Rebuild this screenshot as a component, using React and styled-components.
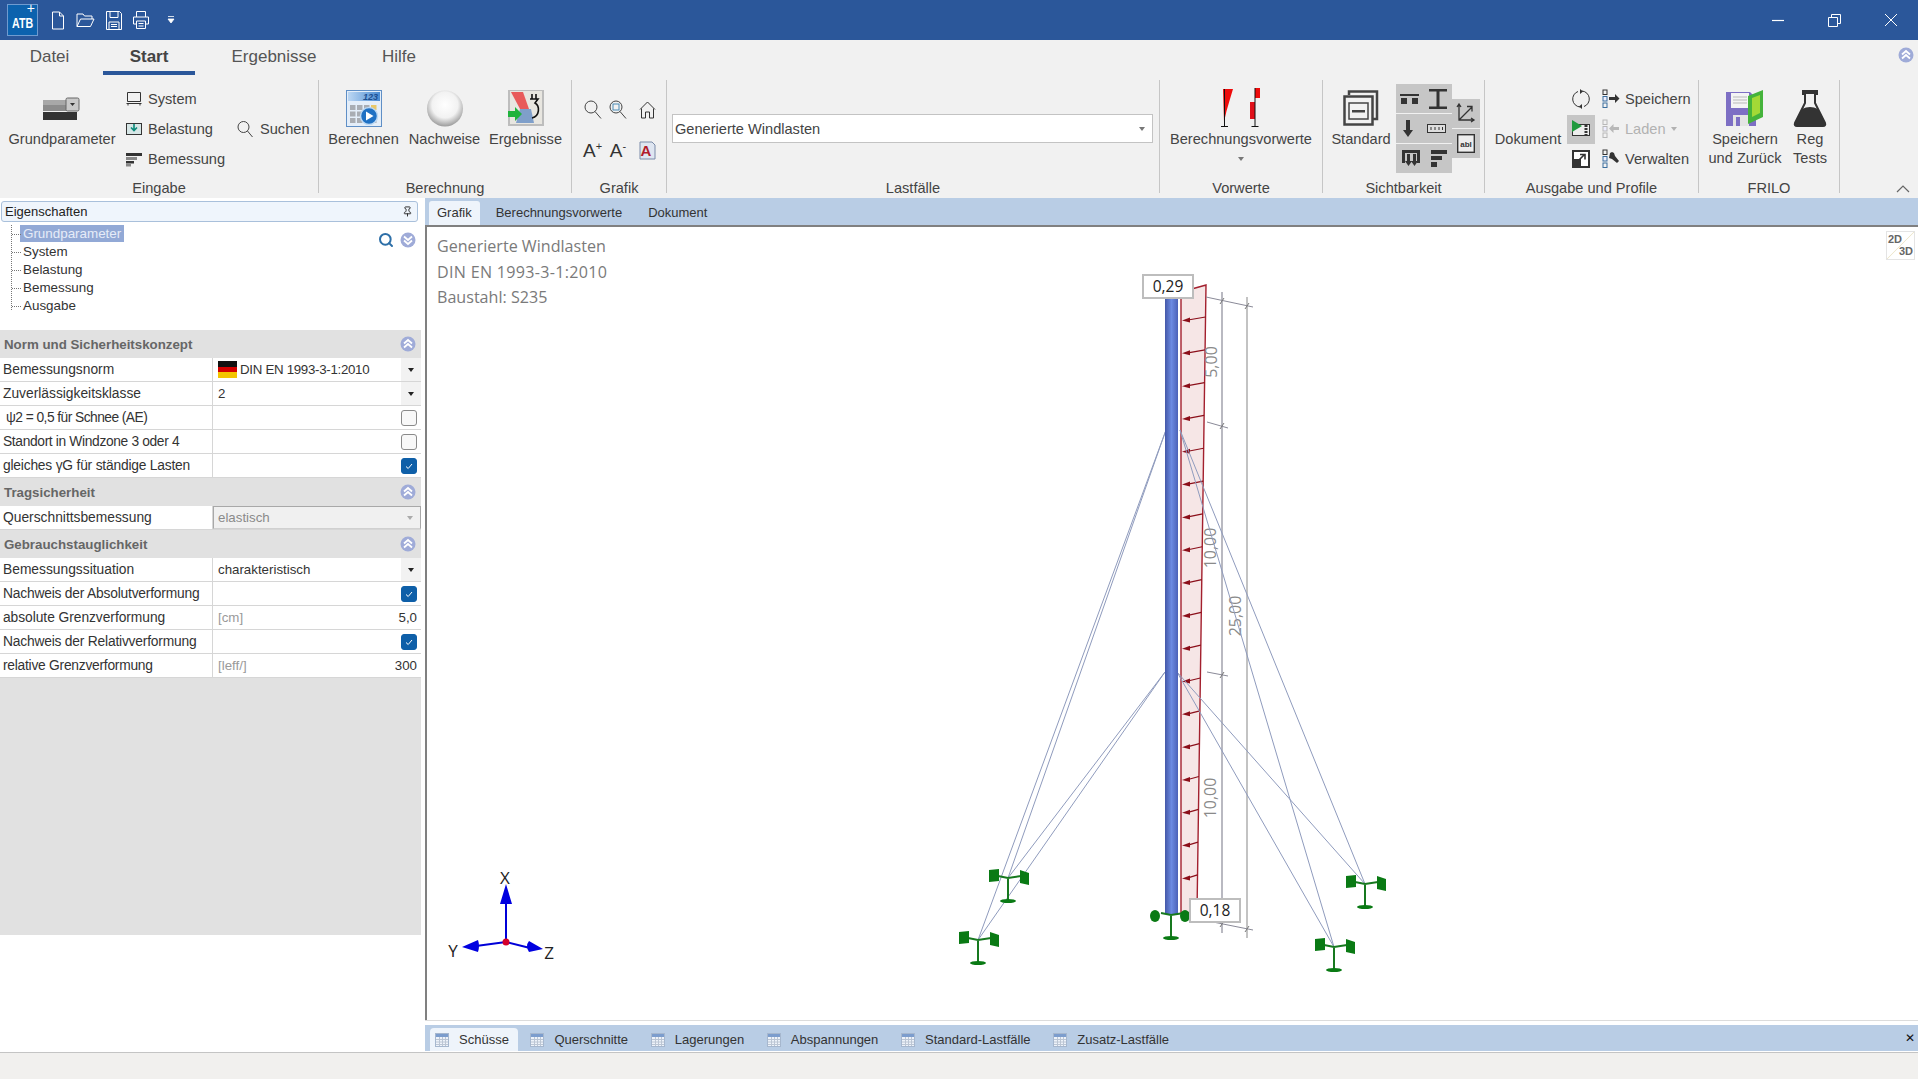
import React from 'react';
import styled, { createGlobalStyle } from 'styled-components';
import { Search, Pin } from 'lucide-react';

const GlobalStyle = createGlobalStyle`
    html, body { margin: 0; padding: 0; background: #fff; overflow: hidden; }
    body { font-family: "Liberation Sans", Arial, sans-serif; color: #3c3c3c; }
    * { box-sizing: border-box; }
`;

const Page = styled.div`
    width: 1918px;
    height: 1079px;
    display: flex;
    flex-direction: column;
`;

/* title bar */
const TitleBar = styled.header`
    height: 40px;
    flex: none;
    background: #2b579a;
    display: flex;
    align-items: center;
    padding-left: 7px;
`;
const Logo = styled.div`
    position: relative;
    width: 31px;
    height: 32px;
    background: #0c62ae;
    border: 1px solid #6f9bd0;
    color: #fff;
    padding: 11px 0 0 0;
    span {
        display: block;
        font-size: 14px;
        font-weight: bold;
        line-height: 14px;
        transform: scaleX(.76);
        transform-origin: 4px 0;
        padding-left: 4px;
    }
    i {
        position: absolute;
        right: 2px;
        top: -3px;
        font-size: 14px;
        font-style: normal;
        line-height: 13px;
    }
`;
const QuickIcons = styled.div`
    display: flex;
    align-items: center;
    margin-left: 13px;
    gap: 11px;
`;
const WindowButtons = styled.div`
    margin-left: auto;
    display: flex;
    align-items: center;
    margin-right: 20px;
    gap: 43px;
`;

/* ribbon */
const Ribbon = styled.div`
    height: 158px;
    flex: none;
    background: #f1f1f1;
    display: flex;
    flex-direction: column;
`;
const TabRow = styled.nav`
    height: 35px;
    flex: none;
    display: flex;
    gap: 4px;
    align-items: stretch;
    padding-right: 4px;
`;
const RibbonTab = styled.div`
    width: ${p => p.$w}px;
    text-align: center;
    font-size: 17px;
    line-height: 33px;
    color: #555;
    ${p => p.$active && `
        font-weight: bold;
        color: #444;
        border-bottom: 4px solid #2b579a;
    `}
`;
const TabRowEnd = styled.div`
    margin-left: auto;
    padding-top: 7px;
`;
const GroupRow = styled.div`
    height: 113px;
    margin-top: 5px;
    display: flex;
`;
const Group = styled.section`
    width: ${p => p.$w}px;
    flex: none;
    height: 113px;
    border-right: 1px solid #c6c6c6;
    display: flex;
    flex-direction: column;
`;
const GroupBody = styled.div`
    height: 95px;
    flex: none;
    display: flex;
    justify-content: ${p => p.$center ? 'center' : 'flex-start'};
    padding-left: ${p => p.$pad || 0}px;
`;
const GroupLabel = styled.div`
    height: 18px;
    text-align: center;
    font-size: 14.6px;
    line-height: 26px;
    color: #444;
`;
const LargeButton = styled.div`
    width: ${p => p.$w}px;
    flex: none;
    display: flex;
    flex-direction: column;
    align-items: center;
    font-size: 14.6px;
    line-height: 19px;
    text-align: center;
    color: #444;
    white-space: nowrap;
`;
const IconSlot = styled.div`
    height: 47px;
    margin-bottom: 3px;
    display: flex;
    align-items: flex-end;
    gap: ${p => p.$gap || 0}px;
`;
const Caret = styled.span`
    display: block;
    width: 0;
    height: 0;
    margin: ${p => p.$m || '0'};
    border-left: ${p => p.$s || 3}px solid transparent;
    border-right: ${p => p.$s || 3}px solid transparent;
    border-top: ${p => (p.$s || 3) + 1}px solid ${p => p.$c || '#777'};
`;
const SmallColumn = styled.div`
    padding-top: ${p => p.$top || 4}px;
    width: ${p => p.$w}px;
    flex: none;
    margin-left: ${p => p.$ml || 0}px;
`;
const SmallItem = styled.div`
    height: 30px;
    display: flex;
    align-items: center;
    gap: ${p => p.$gap ?? 6}px;
    font-size: 14.6px;
    color: ${p => p.$dim ? '#b2b2b2' : '#444'};
    white-space: nowrap;
`;
const IconGrid = styled.div`
    display: grid;
    grid-template-columns: 25px 26px 32px;
    grid-auto-rows: 41px;
    padding: 9px 0 0 8px;
    place-items: center;
`;
const ASign = styled.span`
    font-size: 19px;
    color: #333;
    line-height: 19px;
    sup { font-size: 11px; line-height: 0; vertical-align: 7px; }
`;
const ComboBox = styled.div`
    width: 481px;
    height: 29px;
    margin-top: 34px;
    background: #fff;
    border: 1px solid #c3c3c3;
    display: flex;
    align-items: center;
    justify-content: space-between;
    padding: 0 7px 0 2px;
    font-size: 14.6px;
    color: #444;
`;
const Cluster = styled.div`
    width: ${p => p.$w}px;
    height: ${p => p.$h}px;
    margin-top: ${p => p.$top}px;
    flex: none;
    background: #c6c6c6;
    display: flex;
    flex-direction: column;
`;
const ClusterRow = styled.div`
    flex: 1;
    display: flex;
    justify-content: space-around;
    align-items: center;
    & + & { border-top: 1px solid #f1f1f1; }
`;
const ToolCell = styled.div`
    width: 28px;
    height: 29px;
    margin-right: 2px;
    display: flex;
    align-items: center;
    justify-content: center;
    background: ${p => p.$on ? '#c6c6c6' : 'transparent'};
`;
const ExpandArea = styled.div`
    flex: 1;
    display: flex;
    justify-content: flex-end;
    align-items: flex-end;
    padding: 0 8px 0 0;
`;

/* work area */
const Workspace = styled.main`
    height: 854px;
    flex: none;
    display: flex;
`;
const SidePanel = styled.aside`
    width: 425px;
    flex: none;
    background: #fff;
    display: flex;
    flex-direction: column;
    padding-right: 4px;
`;
const PanelHeader = styled.div`
    height: 21px;
    margin: 3px 3px 0 1px;
    flex: none;
    background: #eff5fc;
    border: 1px solid #a9c0db;
    border-radius: 3px;
    display: flex;
    align-items: center;
    justify-content: space-between;
    padding: 0 4px 0 3px;
    font-size: 13px;
    color: #222;
`;
const TreeArea = styled.div`
    height: 108px;
    flex: none;
    display: flex;
    justify-content: space-between;
    padding: 3px 5px 0 0;
`;
const Tree = styled.ul`
    list-style: none;
    margin: 0 0 0 11px;
    padding: 0;
    height: 85px;
    border-left: 1px dotted #777;
`;
const TreeItem = styled.li`
    position: relative;
    height: 18px;
    line-height: 17px;
    font-size: 13.4px;
    padding-left: 11px;
    color: #333;
    &::before {
        content: '';
        position: absolute;
        left: 0;
        top: 9px;
        width: 9px;
        border-top: 1px dotted #777;
    }
    span {
        display: inline-block;
        padding: 0 3px;
        margin-left: -3px;
        ${p => p.$selected && 'background: #92a9d6; color: #e6ecf8;'}
    }
`;
const TreeTools = styled.div`
    display: flex;
    gap: 6px;
    align-items: center;
    height: 30px;
`;
const SectionHeader = styled.div`
    height: 28px;
    background: #e1e1e1;
    display: flex;
    align-items: center;
    justify-content: space-between;
    padding: 0 5px 0 4px;
    font-size: 13.3px;
    font-weight: bold;
    color: #666;
    flex: none;
`;
const Row = styled.div`
    height: 24px;
    flex: none;
    display: flex;
    border-bottom: 1px solid #d6d6d6;
`;
const RowLabel = styled.div`
    width: 213px;
    flex: none;
    padding-left: ${p => p.$indent ? 6 : 3}px;
    border-right: 1px solid #d6d6d6;
    font-size: 13.8px;
    line-height: 23px;
    letter-spacing: ${p => p.$track || 0}px;
    color: #333;
    white-space: nowrap;
`;
const RowValue = styled.div`
    flex: 1;
    display: flex;
    align-items: center;
    justify-content: space-between;
    padding-left: ${p => p.$disabled ? 4 : 5}px;
    font-size: 13.3px;
    color: ${p => p.$disabled ? '#8a8a8a' : '#333'};
    ${p => p.$disabled && 'background: #f0f0f0; border: 1px solid #a8a8a8; border-bottom-color: #d0d0d0;'}
`;
const NormText = styled.span`
    letter-spacing: -.3px;
`;
const Unit = styled.span`
    color: #9a9a9a;
`;
const NumberValue = styled.span`
    padding-right: 4px;
`;
const ArrowCell = styled.div`
    width: 20px;
    height: 23px;
    display: flex;
    align-items: center;
    justify-content: center;
    background: ${p => p.$plain ? 'transparent' : '#f2f2f2'};
`;
const Flag = styled.span`
    display: inline-block;
    width: 19px;
    height: 17px;
    margin-right: 3px;
    vertical-align: -4px;
    background: linear-gradient(#111 0 33%, #d40000 33% 66%, #f4c400 66% 100%);
`;
const CheckBox = styled.div`
    width: 16px;
    height: 16px;
    margin-right: 4px;
    border-radius: 3px;
    border: 1px solid ${p => p.$on ? '#0e5fa8' : '#8a8a8a'};
    background: ${p => p.$on ? '#0e5fa8' : '#f8f8f8'};
    display: flex;
    align-items: center;
    justify-content: center;
`;
const Filler = styled.div`
    height: 257px;
    flex: none;
    background: #e1e1e1;
`;

/* document side */
const DocArea = styled.div`
    flex: 1;
    display: flex;
    flex-direction: column;
    min-width: 0;
`;
const DocTabs = styled.div`
    height: 27px;
    flex: none;
    background: #b9cde5;
    display: flex;
    align-items: flex-end;
    padding-left: 4px;
`;
const DocTab = styled.div`
    height: 24px;
    padding: ${p => p.$pad};
    font-size: 13px;
    line-height: 23px;
    color: #333;
    ${p => p.$active && 'background: #eef4fb; border-radius: 3px 3px 0 0;'}
`;
const Canvas = styled.div`
    position: relative;
    height: 795px;
    flex: none;
    background: #fff;
    border-top: 2px solid #808080;
    border-left: 2px solid #808080;
    padding: 7px 0 0 10px;
    font-family: "Open Sans", sans-serif;
    font-size: 16.1px;
    line-height: 25.5px;
    color: #7a7a7a;
`;
const CanvasLine = styled.div`
    letter-spacing: ${p => p.$track || 0}px;
`;
const Drawing = styled.svg`
    position: absolute;
    left: 0;
    top: 0;
    width: 1491px;
    height: 793px;
`;
const ViewToggle = styled.div`
    position: absolute;
    right: 3px;
    top: 4px;
    width: 29px;
    height: 29px;
    border: 1px solid #e4e4e4;
    background: linear-gradient(135deg, #fff 48%, #eee8cf 50%, #fff 52%);
    font-family: "Liberation Sans", sans-serif;
    font-size: 11px;
    font-weight: bold;
    line-height: 11px;
    color: #666;
    padding: 2px 1px;
    display: flex;
    flex-direction: column;
    span:last-child { align-self: flex-end; margin-top: 1px; }
`;
const BottomGap = styled.div`
    height: 5px;
    flex: none;
    background: #fff;
    border-top: 1px solid #dcdcdc;
`;
const SheetBar = styled.div`
    height: 26px;
    flex: none;
    background: #b9cde5;
    display: flex;
    align-items: flex-end;
    padding-left: 5px;
`;
const SheetTab = styled.div`
    height: 23px;
    display: flex;
    align-items: center;
    gap: 10px;
    padding: ${p => p.$active ? '0 9.5px 0 5px' : '0 10.7px 0 12px'};
    font-size: 13px;
    color: #333;
    ${p => p.$active && 'background: #eef4fb; border-radius: 4px 4px 0 0;'}
`;
const SheetClose = styled.div`
    margin-left: auto;
    margin-right: 3px;
    align-self: center;
    font-size: 12px;
    color: #111;
`;
const StatusBar = styled.footer`
    flex: 1;
    background: #f1f0ee;
    border-top: 1px solid #c4c4c4;
`;

/* drawings */
const CollapseIcon = ({ down }) => (
    <svg width="16" height="16" viewBox="0 0 16 16">
        <circle cx="8" cy="8" r="7.5" fill="#9fabd8" />
        <path d={down ? 'M4 4.5 8 8l4-3.5M4 8.5 8 12l4-3.5' : 'M4 7.5 8 4l4 3.5M4 11.5 8 8l4 3.5'} fill="none" stroke="#fff" strokeWidth="1.8" />
    </svg>
);
const Line = ({ children, w = 16, h = 16, sw = 1, c = '#fff' }) => (
    <svg width={w} height={h} viewBox={`0 0 ${w} ${h}`} fill="none" stroke={c} strokeWidth={sw}>{children}</svg>
);
const TableIcon = () => (
    <svg width="14" height="14" viewBox="0 0 14 14">
        <rect x=".5" y=".5" width="13" height="13" fill="#eef3fa" stroke="#a6b7ce" />
        <rect x="1" y="1" width="12" height="3" fill="#7c9dcd" />
        <path d="M1 6.5h12M1 9h12M1 11.5h12M4.5 4v9M7.5 4v9M10.5 4v9" stroke="#bcc6d4" />
    </svg>
);
const BigSlot = ({ children, w = 40 }) => (
    <svg width={w} height="37" viewBox={`0 0 ${w} 37`}>{children}</svg>
);

const GrundIcon = () => (
    <BigSlot>
        <rect x="1" y="10" width="34" height="5" fill="#a8a8a8" />
        <rect x="1" y="15" width="34" height="6" fill="#8c8c8c" />
        <rect x="1" y="22" width="34" height="8" fill="#333" />
        <rect x="24" y="8" width="13" height="13" rx="1.5" fill="#c9c9c9" stroke="#666" />
        <path d="M28 13h5l-2.5 3z" fill="#333" />
    </BigSlot>
);
const CalcIcon = () => (
    <BigSlot w={36}>
        <defs>
            <linearGradient id="calcTop" x1="0" y1="0" x2="1" y2="0">
                <stop offset="0" stopColor="#bcd7f3" />
                <stop offset="1" stopColor="#4a8bd2" />
            </linearGradient>
        </defs>
        <rect x=".5" y=".5" width="35" height="36" fill="#e4eef9" stroke="#5f8fc6" />
        <rect x="2" y="2" width="32" height="9" fill="url(#calcTop)" />
        <text x="32" y="10" textAnchor="end" fontSize="9" fontStyle="italic" fontWeight="bold" fill="#1d4f91">123</text>
        {[0, 1, 2, 3].map(i => [0, 1, 2].map(j => (
            <rect key={`${i}${j}`} x={4 + i * 7} y={15 + j * 6.5} width="5.5" height="5" fill={i === 3 && j === 0 ? '#e8c86a' : '#a9adb3'} />
        )))}
        <circle cx="23" cy="26" r="8.5" fill="#1f71c4" stroke="#bcd8f3" strokeWidth="1.5" />
        <path d="M20 21.5v9l7.5-4.5z" fill="#fff" />
    </BigSlot>
);
const SphereIcon = () => (
    <BigSlot w={38}>
        <defs>
            <radialGradient id="sphere" cx=".5" cy=".4" r=".6">
                <stop offset="0" stopColor="#fff" />
                <stop offset=".6" stopColor="#f2f2f2" />
                <stop offset="1" stopColor="#9b9b9b" />
            </radialGradient>
        </defs>
        <ellipse cx="19" cy="18.5" rx="18" ry="18" fill="url(#sphere)" />
    </BigSlot>
);
const ResultIcon = () => (
    <BigSlot w={36}>
        <rect x="1" width="34" height="35" fill="#e8e6e0" stroke="#bdbdbd" strokeWidth="2" />
        <path d="M3 2h12l6 17H12z" fill="#e85a5a" />
        <path d="M12 19h11l3 14H8z" fill="#7f9fca" />
        <path d="M24 4v5M28 4v5M22 9h8l-3 4c5 3 5 13-3 15" fill="none" stroke="#111" strokeWidth="1.6" />
        <path d="M0 21h7v-4l7 7-7 7v-4H0z" fill="#1fb33c" />
    </BigSlot>
);
const FlagLeftIcon = () => (
    <svg width="14" height="39" viewBox="0 0 14 39">
        <path d="M2 1h10L9 11 5.5 23 3 34z" fill="#ee0b0b" />
        <path d="M3.5 1v38M0 38.5h7" stroke="#111" fill="none" />
    </svg>
);
const FlagRightIcon = () => (
    <svg width="12" height="39" viewBox="0 0 12 39">
        <rect x="6" y="0" width="5" height="10" fill="#ee0b0b" />
        <rect x="1" y="14" width="5" height="17" fill="#e0101a" />
        <path d="M6 0v39M2.5 38.5h7" stroke="#111" fill="none" />
    </svg>
);
const WindowsIcon = () => (
    <BigSlot w={36}>
        <path d="M6 5V1.500h28V29h-4" fill="none" stroke="#444" strokeWidth="2.500" />
        <rect x="1.500" y="6.500" width="28" height="28" fill="#f1f1f1" stroke="#444" strokeWidth="2.500" />
        <rect x="6" y="13" width="19" height="16" fill="none" stroke="#444" strokeWidth="1.500" />
        <rect x="9" y="20" width="13" height="2.500" fill="#444" />
    </BigSlot>
);
const FloppyIcon = () => (
    <BigSlot w={38}>
        <path d="M0 2h24l6 6v28H0z" fill="#7d6fc4" />
        <rect x="5" y="3" width="18" height="15" fill="#f4f4f4" />
        <path d="M7 7h14M7 10h14M7 13h14" stroke="#b9b9b9" />
        <rect x="7" y="25" width="16" height="11" fill="#e4e4e4" />
        <rect x="10" y="27" width="4" height="9" fill="#7d6fc4" />
        <path d="M22 6 37 0v27l-15 7z" fill="#45b33b" />
        <path d="M26 8 34 5v18l-8 4z" fill="#a3d936" />
    </BigSlot>
);
const FlaskIcon = () => (
    <BigSlot w={34}>
        <path d="M10 1h14v3h-2v9l10 20q1 3-2 3H4q-3 0-2-3l10-20V4h-2z" fill="#f1f1f1" stroke="#333" strokeWidth="2" />
        <path d="M10 1h14v3H10z" fill="#333" />
        <path d="M9 19q8-4 16 0l7 14q1 3-2 3H4q-3 0-2-3z" fill="#333" />
    </BigSlot>
);
const ListArrow = ({ back, dim, wrench }) => {
    const c = dim ? '#b8b8b8' : '#333';
    const box = dim ? '#b8b8b8' : '#3b6e9e';
    return (
        <svg width="18" height="20" viewBox="0 0 18 20" fill="none">
            <rect x="1" y="1" width="4" height="4.5" stroke={c} />
            <rect x="1" y="7.5" width="4" height="4.5" fill="#eef" stroke={box} />
            <rect x="1" y="14" width="4" height="4.5" stroke={box} />
            {wrench
                ? <path d="M8 4l2-1 2 1 1 3 4 5-2 2-5-4-3-1z" fill={c} />
                : <path d={back ? 'M17 8H11.500V5L7 9.500 11.500 14v-3H17z' : 'M7 8h6V5l4.500 4.500L13 14v-3H7z'} fill={c} />}
        </svg>
    );
};

const Support = ({ x, y, balls }) => (
    <g>
        <path d={`M${x - 10} ${y - 2} L${x} ${y} L${x + 13} ${y - 2} M${x} ${y} V${y + 22}`} fill="none" stroke="#17791f" strokeWidth="2" />
        <ellipse cx={x} cy={y + 23} rx="8" ry="2" fill="#0a7a14" />
        {balls ? (
            <>
                <ellipse cx={x - 16} cy={y + 1} rx="5" ry="6" fill="#0a7a14" />
                <ellipse cx={x + 14} cy={y + 1} rx="5" ry="6" fill="#0a7a14" />
            </>
        ) : (
            <>
                <path d={`M${x - 19} ${y - 8}l10 -1v12l-10 1z`} fill="#0a7a14" />
                <path d={`M${x + 12} ${y - 8}l9 3v12l-9 -2z`} fill="#0a7a14" />
            </>
        )}
    </g>
);
const ValueTag = ({ x, y, w, children }) => (
    <g>
        <rect x={x} y={y} width={w} height="23" fill="#fff" stroke="#bdbdbd" strokeWidth="2" />
        <text x={x + w / 2} y={y + 17} textAnchor="middle" fontSize="15.5" fill="#222">{children}</text>
    </g>
);
const DimText = ({ x, y, children }) => (
    <text transform={`translate(${x} ${y}) rotate(-90)`} textAnchor="middle" fontSize="16" fill="#8a8a8a">{children}</text>
);

const anchors = {
    a1: [1008, 878], a2: [978, 940], a3: [1365, 884], a4: [1334, 947]
};
const guys = [
    [1166, 430, anchors.a1], [1166, 430, anchors.a2],
    [1165, 672, anchors.a1], [1165, 672, anchors.a2],
    [1180, 430, anchors.a3], [1180, 430, anchors.a4],
    [1177, 672, anchors.a3], [1177, 672, anchors.a4]
];
const loadArrows = Array.from({ length: 18 }, (_, i) => 320 + i * 32.82);
const edgeX = y => 1206 - (y - 285) * (9 / 628);
const dimMarks = [[1222, 301], [1247, 306], [1222, 426], [1222, 675], [1222, 924], [1247, 929]];

const MastDrawing = () => (
    <Drawing viewBox="427 227 1491 793">
        <defs>
            <linearGradient id="mast" x1="0" y1="0" x2="1" y2="0">
                <stop offset="0" stopColor="#4458a8" />
                <stop offset=".5" stopColor="#6c8be2" />
                <stop offset="1" stopColor="#4b62b8" />
            </linearGradient>
        </defs>
        {/* load trapeze */}
        <path d="M1181 292 L1206 285 L1197 913 L1181 913 Z" fill="#f6e6e6" stroke="#a3202e" strokeWidth="1.4" />
        {loadArrows.map(y => (
            <g key={y}>
                <path d={`M${edgeX(y)} ${y - 3} L1188 ${y}`} stroke="#8b0f1a" strokeWidth="1.2" fill="none" />
                <path d={`M1182 ${y + .5} l8 -3 v5z`} fill="#8b0f1a" />
            </g>
        ))}
        {/* dimension lines */}
        <path d="M1222 292V933" stroke="#8a8a98" strokeWidth="1.2" fill="none" />
        <path d="M1247 297V938" stroke="#b4b4b4" strokeWidth="1.6" fill="none" />
        <path d="M1206 297 L1253 307 M1207 422 L1228 428 M1207 672 L1228 676 M1213 922 L1253 930" stroke="#8a8a98" fill="none" />
        {dimMarks.map(([x, y]) => (
            <path key={`${x}${y}`} d={`M${x - 2} ${y + 3} L${x + 2} ${y - 3}`} stroke="#777" fill="none" />
        ))}
        <DimText x="1217" y="362">5,00</DimText>
        <DimText x="1216" y="548">10,00</DimText>
        <DimText x="1241" y="616">25,00</DimText>
        <DimText x="1216" y="798">10,00</DimText>
        {/* guy wires */}
        {guys.map(([x, y, [ax, ay]]) => (
            <path key={`${x}${y}${ax}`} d={`M${x} ${y} L${ax} ${ay}`} stroke="#8f9bbd" strokeWidth="1" fill="none" />
        ))}
        <rect x="1165" y="298" width="13" height="616" fill="url(#mast)" />
        <Support x={1008} y={878} />
        <Support x={978} y={940} />
        <Support x={1365} y={884} />
        <Support x={1334} y={947} />
        <Support x={1171} y={915} balls />
        <ValueTag x={1143} y={275} w={50}>0,29</ValueTag>
        <ValueTag x={1190} y={899} w={50}>0,18</ValueTag>
        {/* coordinate axes */}
        <path d="M506 942V900M506 942 476 946M506 942 530 948" stroke="#0000d8" strokeWidth="2" fill="none" />
        <path d="M506 884l6 20h-12zM462 947l16 -7q2 6 0 12zM543 949l-14 -8q-4 5 0 11z" fill="#0000e0" />
        <circle cx="506" cy="942" r="3.5" fill="#d4002a" />
        <text x="505" y="884" textAnchor="middle" fontSize="17" fill="#222">X</text>
        <text x="453" y="957" textAnchor="middle" fontSize="17" fill="#222">Y</text>
        <text x="549" y="959" textAnchor="middle" fontSize="17" fill="#222">Z</text>
    </Drawing>
);

const normRows = [
    { label: 'Bemessungsnorm', value: <span><Flag /><NormText>DIN EN 1993-3-1:2010</NormText></span>, arrow: true },
    { label: 'Zuverlässigkeitsklasse', value: '2', arrow: true },
    { label: 'ψ2 = 0,5 für Schnee (AE)', check: false, indent: true, track: -.55 },
    { label: 'Standort in Windzone 3 oder 4', check: false, track: -.35 },
    { label: 'gleiches γG für ständige Lasten', check: true, track: -.2 }
];
const usageRows = [
    { label: 'Bemessungssituation', value: 'charakteristisch', arrow: true },
    { label: 'Nachweis der Absolutverformung', check: true, track: -.2 },
    { label: 'absolute Grenzverformung', unit: '[cm]', number: '5,0', track: -.05 },
    { label: 'Nachweis der Relativverformung', check: true, track: -.2 },
    { label: 'relative Grenzverformung', unit: '[leff/]', number: '300', track: -.25 }
];
const treeItems = ['Grundparameter', 'System', 'Belastung', 'Bemessung', 'Ausgabe'];
const sheets = ['Schüsse', 'Querschnitte', 'Lagerungen', 'Abspannungen', 'Standard-Lastfälle', 'Zusatz-Lastfälle'];

const PropertyRow = ({ row }) => (
    <Row>
        <RowLabel $indent={row.indent} $track={row.track}>{row.label}</RowLabel>
        <RowValue>
            {row.unit ? <Unit>{row.unit}</Unit> : <span>{row.value}</span>}
            {row.number && <NumberValue>{row.number}</NumberValue>}
            {row.arrow && <ArrowCell><Caret $c="#222" /></ArrowCell>}
            {row.check !== undefined && (
                <CheckBox $on={row.check}>
                    {row.check && <Line w={10} h={10}><path d="M2 5.5 4.2 7.5 8 3" /></Line>}
                </CheckBox>
            )}
        </RowValue>
    </Row>
);

const AText = ({ sign }) => <ASign>A<sup>{sign}</sup></ASign>;

export default function App() {
    return (
        <Page>
            <GlobalStyle />
            <TitleBar>
                <Logo><span>ATB</span><i>+</i></Logo>
                <QuickIcons>
                    <Line w={14} h={19}><path d="M1.5 1h7l4 4v13h-11zM8.5 1v4h4" /></Line>
                    <Line w={19} h={16}><path d="M1 14.5V2h6l1.5 2H16v3M1 14.5h13.5L18 7H4.5z" /></Line>
                    <Line w={16} h={19}><path d="M.5.5h13l2 2v16H.5zM4 .5v6h8v-6M3 18v-7h10v7M5 13.500h6M5 15.500h6" /></Line>
                    <Line w={16} h={18}><path d="M3.500 6V.5h9V6M.5 6h15v7h-3M3.500 13H.5V6M3.500 10h9v7.500h-9zM5.500 12.500h5M5.500 15h5" /></Line>
                    <svg width="8" height="8" viewBox="0 0 8 8" style={{ marginLeft: 7 }}><path d="M1 .5h6M1 3h6L4 7z" stroke="#fff" fill="#fff" strokeWidth=".8" /></svg>
                </QuickIcons>
                <WindowButtons>
                    <Line w={14} h={14} sw={1.2}><path d="M1 7.500h12" /></Line>
                    <Line w={13} h={13}><path d="M.5 3.500h9v9h-9zM3.500 3.500v-3h9v9h-3" /></Line>
                    <Line w={14} h={14}><path d="M1 1l12 12M13 1 1 13" /></Line>
                </WindowButtons>
            </TitleBar>

            <Ribbon>
                <TabRow>
                    <RibbonTab $w={99}>Datei</RibbonTab>
                    <RibbonTab $w={92} $active>Start</RibbonTab>
                    <RibbonTab $w={150}>Ergebnisse</RibbonTab>
                    <RibbonTab $w={92}>Hilfe</RibbonTab>
                    <TabRowEnd><CollapseIcon /></TabRowEnd>
                </TabRow>
                <GroupRow>
                    <Group $w={319}>
                        <GroupBody>
                            <LargeButton $w={124}>
                                <IconSlot><GrundIcon /></IconSlot>
                                Grundparameter
                            </LargeButton>
                            <SmallColumn $w={111} $ml={2}>
                                <SmallItem>
                                    <Line w={16} h={14} c="#333"><path d="M1.500.5h13v9h-13zM.5 11.500h15M2 11.500v2M14 11.500v2" /></Line>
                                    System
                                </SmallItem>
                                <SmallItem>
                                    <svg width="16" height="14" viewBox="0 0 16 14"><rect x=".5" y="1.500" width="15" height="11" fill="#d6e6e6" stroke="#333" /><path d="M8 2v6M5 5.500l3 3 3-3" stroke="#0a8a7a" strokeWidth="1.600" fill="none" /></svg>
                                    Belastung
                                </SmallItem>
                                <SmallItem>
                                    <svg width="16" height="15" viewBox="0 0 16 15"><path d="M0 1h16v3H0z" fill="#333" /><path d="M0 5h11v3H0z" fill="#888" /><path d="M0 9h8v2.500H0z" fill="#333" /><path d="M0 12h5v2.500H0z" fill="#888" /></svg>
                                    Bemessung
                                </SmallItem>
                            </SmallColumn>
                            <SmallColumn $w={76} $top={34}>
                                <SmallItem $gap={7}>
                                    <Line w={16} h={18} c="#444"><circle cx="6.500" cy="7" r="5.500" /><path d="M10.500 11l5 6" /></Line>
                                    Suchen
                                </SmallItem>
                            </SmallColumn>
                        </GroupBody>
                        <GroupLabel>Eingabe</GroupLabel>
                    </Group>

                    <Group $w={253}>
                        <GroupBody $pad={4}>
                            <LargeButton $w={81}><IconSlot><CalcIcon /></IconSlot>Berechnen</LargeButton>
                            <LargeButton $w={81}><IconSlot><SphereIcon /></IconSlot>Nachweise</LargeButton>
                            <LargeButton $w={81}><IconSlot><ResultIcon /></IconSlot>Ergebnisse</LargeButton>
                        </GroupBody>
                        <GroupLabel>Berechnung</GroupLabel>
                    </Group>

                    <Group $w={95}>
                        <GroupBody>
                            <IconGrid>
                                <Line w={18} h={20} c="#444"><circle cx="7" cy="7" r="6" /><path d="M11 11.500l6 7" /></Line>
                                <Line w={18} h={20} c="#444"><circle cx="7" cy="7" r="6" /><path d="M11 11.500l6 7" /><rect x="4" y="4" width="6" height="6" stroke="#4a8bb5" /></Line>
                                <Line w={17} h={18} c="#333"><path d="M1 8.500 8.500 1 16 8.500M2.500 7.500v9.500h4v-6h4v6h4V7.500" /></Line>
                                <AText sign="+" />
                                <AText sign="-" />
                                <svg width="18" height="19" viewBox="0 0 18 19">
                                    <path d="M2 1h12l3 3v14H2z" fill="#dfe6f1" stroke="#7a8ba8" />
                                    <text x="8" y="15" textAnchor="middle" fontSize="15" fontWeight="bold" fill="#b21c2c">A</text>
                                </svg>
                            </IconGrid>
                        </GroupBody>
                        <GroupLabel>Grafik</GroupLabel>
                    </Group>

                    <Group $w={493}>
                        <GroupBody $pad={5}>
                            <ComboBox>Generierte Windlasten<Caret /></ComboBox>
                        </GroupBody>
                        <GroupLabel>Lastfälle</GroupLabel>
                    </Group>

                    <Group $w={163}>
                        <GroupBody $center>
                            <LargeButton $w={150}>
                                <IconSlot $gap={14}><FlagLeftIcon /><FlagRightIcon /></IconSlot>
                                Berechnungsvorwerte
                                <Caret $m="8px 0 0 0" />
                            </LargeButton>
                        </GroupBody>
                        <GroupLabel>Vorwerte</GroupLabel>
                    </Group>

                    <Group $w={162}>
                        <GroupBody $pad={3}>
                            <LargeButton $w={70}><IconSlot><WindowsIcon /></IconSlot>Standard</LargeButton>
                            <Cluster $w={56} $h={89} $top={4}>
                                <ClusterRow>
                                    <svg width="19" height="13" viewBox="0 0 19 13"><path d="M0 2h19v2H0zM1 6h6v6H1zM12 6h6v6h-6z" fill="#333" /></svg>
                                    <svg width="20" height="22" viewBox="0 0 20 22"><path d="M1 1h18v2.500h-7.500v15H19V21H1v-2.500h7.500v-15H1z" fill="#333" /></svg>
                                </ClusterRow>
                                <ClusterRow>
                                    <svg width="12" height="17" viewBox="0 0 12 17"><path d="M4 0h4v10h3l-5 7-5-7h3z" fill="#333" /></svg>
                                    <svg width="19" height="9" viewBox="0 0 19 9"><rect x=".5" y=".5" width="18" height="8" fill="#ddd" stroke="#333" /><path d="M4 3v3M8 3v3M12 3v3M15.500 3v3" stroke="#333" /></svg>
                                </ClusterRow>
                                <ClusterRow>
                                    <svg width="20" height="19" viewBox="0 0 20 19"><path d="M1 1h18v3H1zM1 4h3v10H1zM16 4h3v10h-3zM6 5h3v7h2l-3.500 5L4 12h2zM12 5h3v7h2l-3.500 5L10 12h2z" fill="#333" /></svg>
                                    <svg width="16" height="18" viewBox="0 0 16 18"><path d="M0 0h16v4H0zM0 6h11v4H0zM0 12h6v5H0z" fill="#333" /></svg>
                                </ClusterRow>
                            </Cluster>
                            <Cluster $w={28} $h={59} $top={19}>
                                <ClusterRow>
                                    <Line w={20} h={21} c="#333" sw={1.300}><path d="M3 1v16h15M3 17 16 4M1 4l2-3 2 3M15 15l3 2-3 2M11 3.500h5v5" /></Line>
                                </ClusterRow>
                                <ClusterRow>
                                    <svg width="18" height="19" viewBox="0 0 18 19">
                                        <rect x=".7" y=".7" width="16.600" height="17.600" fill="#ededed" stroke="#333" strokeWidth="1.400" />
                                        <text x="9" y="12.500" textAnchor="middle" fontSize="8" fontWeight="bold" fill="#333">abl</text>
                                    </svg>
                                </ClusterRow>
                            </Cluster>
                        </GroupBody>
                        <GroupLabel>Sichtbarkeit</GroupLabel>
                    </Group>

                    <Group $w={214}>
                        <GroupBody $pad={4}>
                            <LargeButton $w={78}><IconSlot />Dokument</LargeButton>
                            <SmallColumn $w={126}>
                                <SmallItem $gap={5}>
                                    <ToolCell>
                                        <Line w={18} h={22} c="#333"><path d="M6 3.500a8 8 0 0 0 2 15.500M12 18.500a8 8 0 0 0-2-15.500" /><path d="M8 1v5l3-2.500zM10 21v-5l-3 2.500z" fill="#333" stroke="none" /></Line>
                                    </ToolCell>
                                    <ListArrow />Speichern
                                </SmallItem>
                                <SmallItem $gap={5} $dim>
                                    <ToolCell $on>
                                        <svg width="20" height="18" viewBox="0 0 20 18"><rect x="1.500" y="4.500" width="17" height="11" fill="#eee" stroke="#333" /><path d="M15 5v10" stroke="#333" strokeWidth="3" strokeDasharray="2 1" /><path d="M1 0l10 6-10 6z" fill="#1e9a3c" /></svg>
                                    </ToolCell>
                                    <ListArrow back dim />Laden<Caret $c="#b2b2b2" />
                                </SmallItem>
                                <SmallItem $gap={5}>
                                    <ToolCell>
                                        <svg width="18" height="18" viewBox="0 0 18 18"><rect x="1" y="1" width="16" height="16" fill="#fff" stroke="#333" strokeWidth="2" /><rect x="1" y="9" width="8" height="8" fill="#333" /><path d="M7 10l5-5M8 4.500h5v5" stroke="#333" strokeWidth="1.600" fill="none" /></svg>
                                    </ToolCell>
                                    <ListArrow wrench />Verwalten
                                </SmallItem>
                            </SmallColumn>
                        </GroupBody>
                        <GroupLabel>Ausgabe und Profile</GroupLabel>
                    </Group>

                    <Group $w={141}>
                        <GroupBody>
                            <LargeButton $w={92}><IconSlot><FloppyIcon /></IconSlot>Speichern<br />und Zurück</LargeButton>
                            <LargeButton $w={38}><IconSlot><FlaskIcon /></IconSlot>Reg<br />Tests</LargeButton>
                        </GroupBody>
                        <GroupLabel>FRILO</GroupLabel>
                    </Group>

                    <ExpandArea>
                        <Line w={14} h={8} c="#666" sw={1.200}><path d="M1 7l6-6 6 6" /></Line>
                    </ExpandArea>
                </GroupRow>
            </Ribbon>

            <Workspace>
                <SidePanel>
                    <PanelHeader>Eigenschaften<Pin size={11} color="#222" strokeWidth={2} /></PanelHeader>
                    <TreeArea>
                        <Tree>
                            {treeItems.map((item, i) => (
                                <TreeItem key={item} $selected={i === 0}><span>{item}</span></TreeItem>
                            ))}
                        </Tree>
                        <TreeTools>
                            <Search size={16} color="#2d6fa8" strokeWidth={3} />
                            <CollapseIcon down />
                        </TreeTools>
                    </TreeArea>
                    <SectionHeader>Norm und Sicherheitskonzept<CollapseIcon /></SectionHeader>
                    {normRows.map(row => <PropertyRow key={row.label} row={row} />)}
                    <SectionHeader>Tragsicherheit<CollapseIcon /></SectionHeader>
                    <Row>
                        <RowLabel>Querschnittsbemessung</RowLabel>
                        <RowValue $disabled>elastisch<ArrowCell $plain><Caret $c="#aaa" /></ArrowCell></RowValue>
                    </Row>
                    <SectionHeader>Gebrauchstauglichkeit<CollapseIcon /></SectionHeader>
                    {usageRows.map(row => <PropertyRow key={row.label} row={row} />)}
                    <Filler />
                </SidePanel>

                <DocArea>
                    <DocTabs>
                        <DocTab $active $pad="0 8px">Grafik</DocTab>
                        <DocTab $pad="0 14px 0 16px">Berechnungsvorwerte</DocTab>
                        <DocTab $pad="0 12px">Dokument</DocTab>
                    </DocTabs>
                    <Canvas>
                        <MastDrawing />
                        <CanvasLine>Generierte Windlasten</CanvasLine>
                        <CanvasLine $track={.3}>DIN EN 1993-3-1:2010</CanvasLine>
                        <CanvasLine>Baustahl: S235</CanvasLine>
                        <ViewToggle><span>2D</span><span>3D</span></ViewToggle>
                    </Canvas>
                    <BottomGap />
                    <SheetBar>
                        {sheets.map((sheet, i) => (
                            <SheetTab key={sheet} $active={i === 0}><TableIcon />{sheet}</SheetTab>
                        ))}
                        <SheetClose>✕</SheetClose>
                    </SheetBar>
                </DocArea>
            </Workspace>
            <StatusBar />
        </Page>
    );
}
